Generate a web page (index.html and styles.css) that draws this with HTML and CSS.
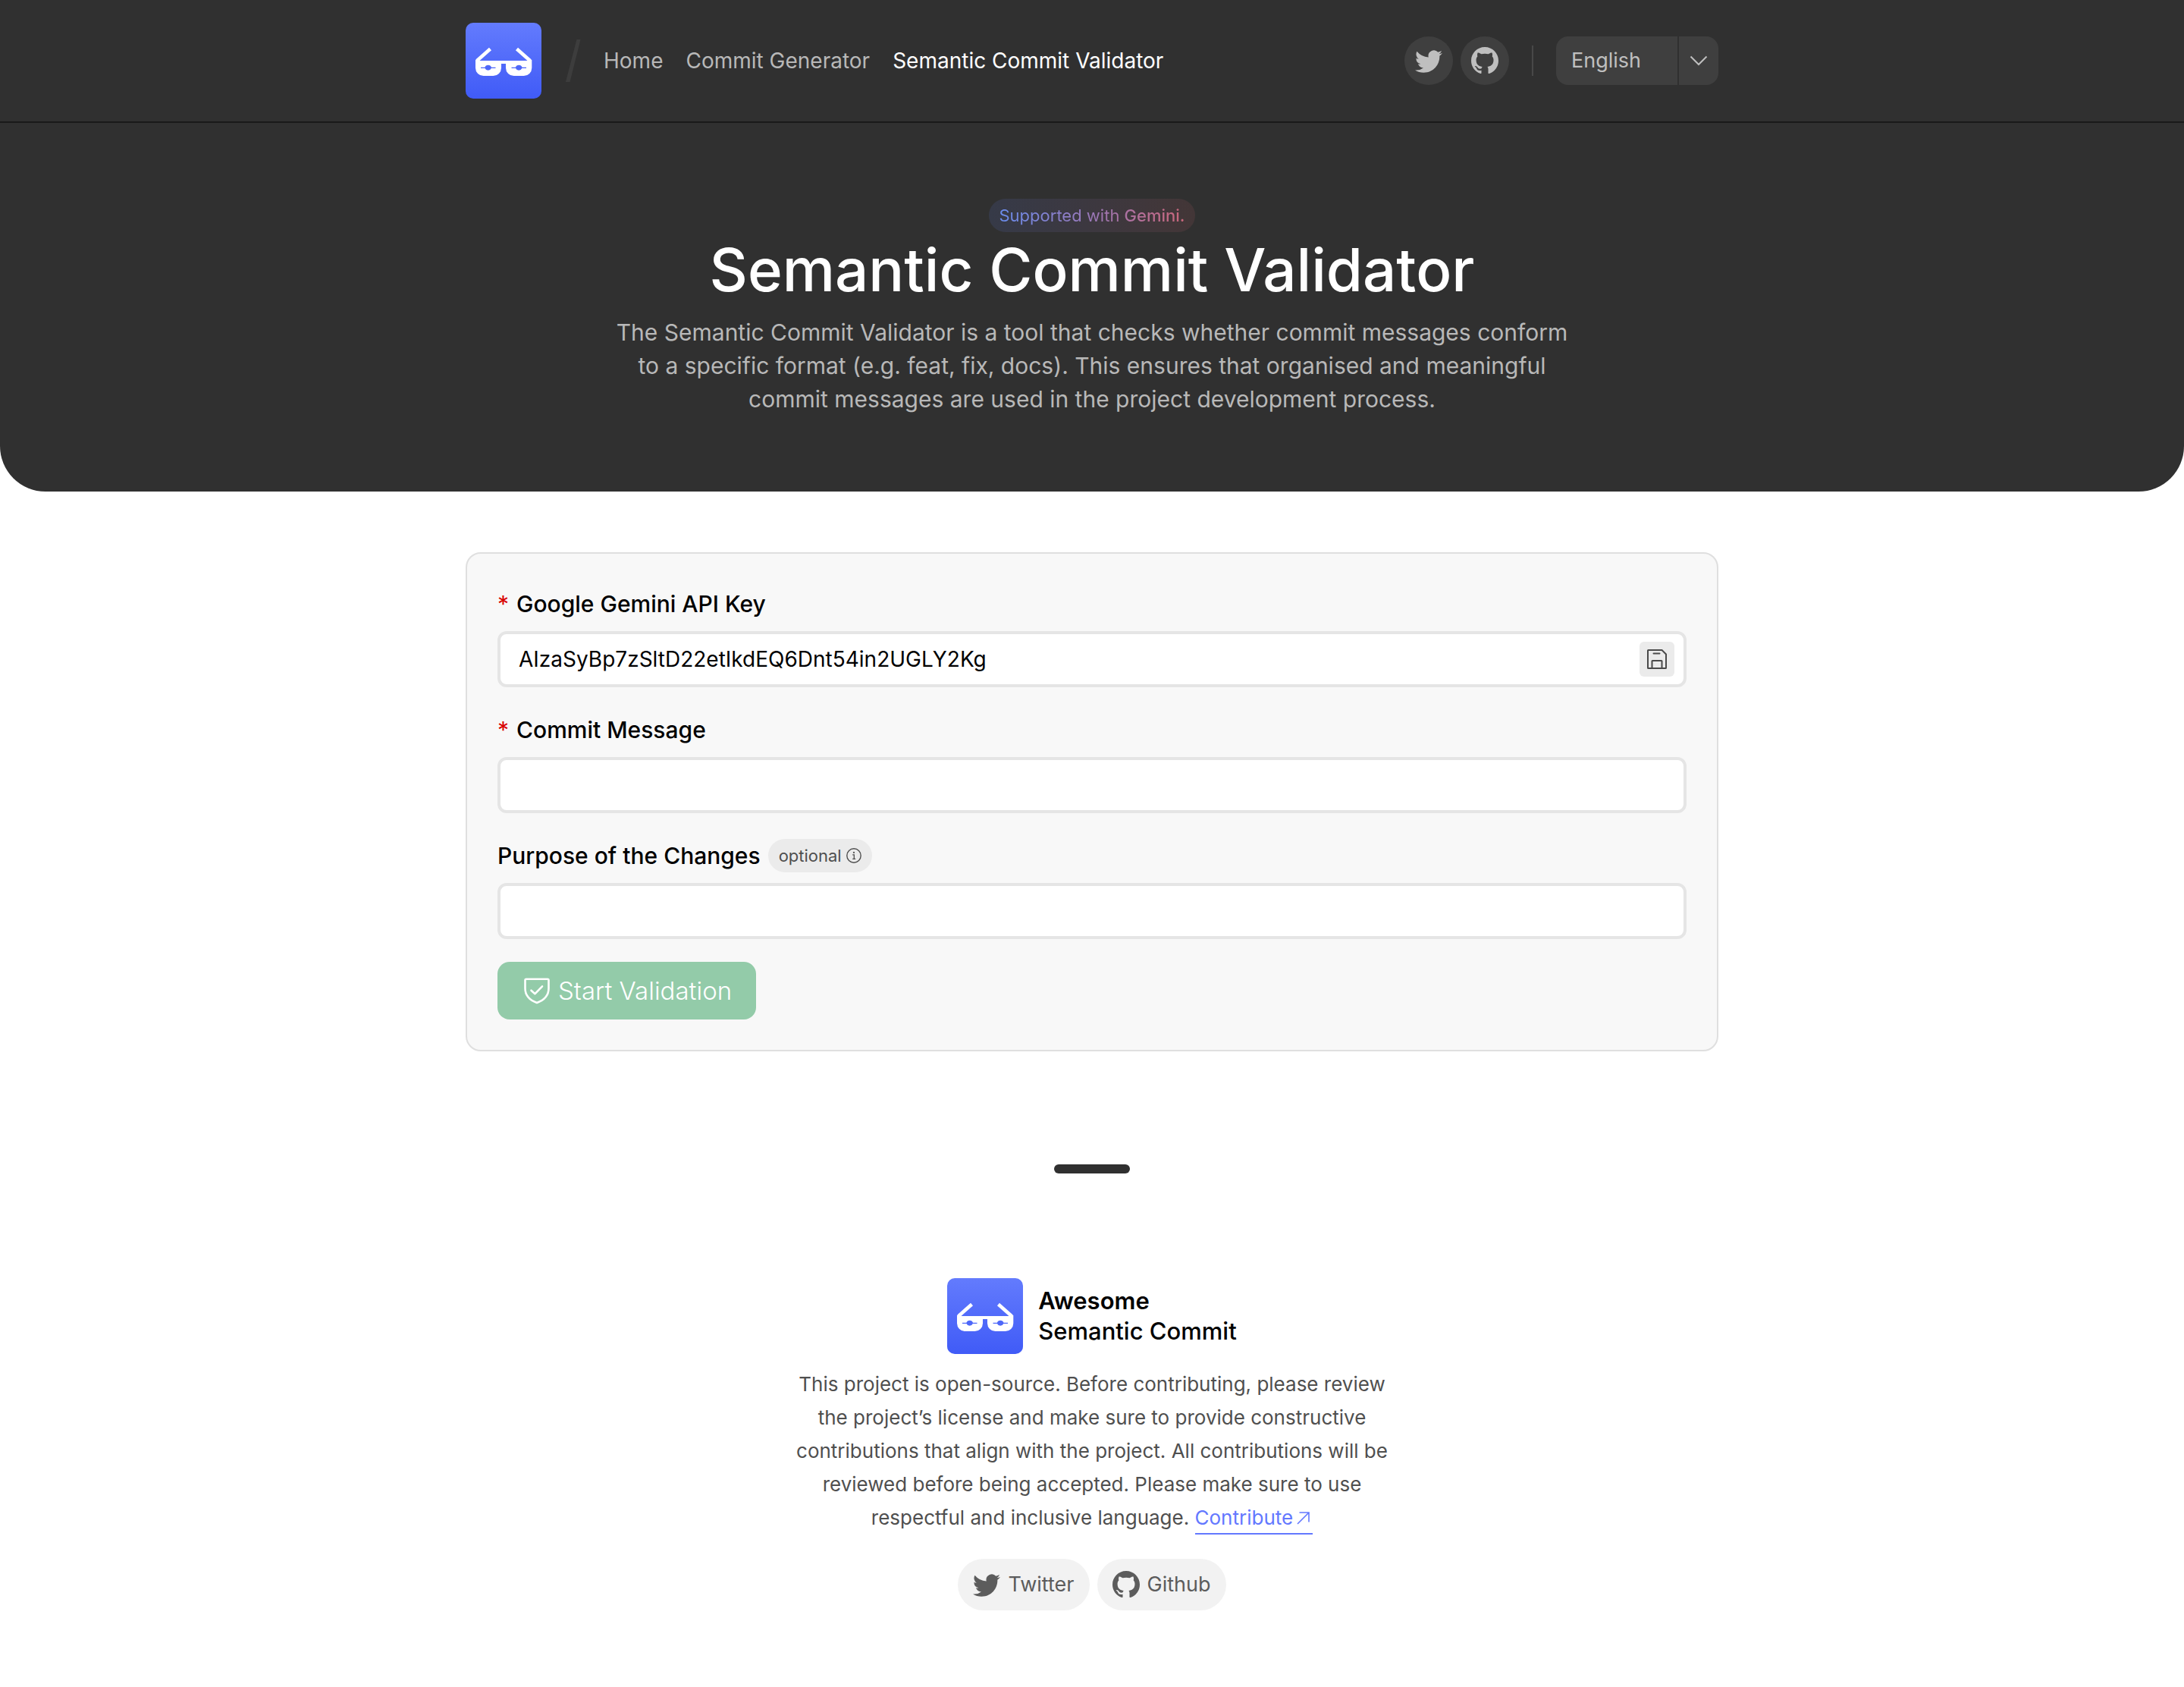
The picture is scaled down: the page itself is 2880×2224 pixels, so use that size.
FILE: index.html
```html
<!DOCTYPE html>
<html lang="en">
<head>
<meta charset="utf-8">
<title>Semantic Commit Validator</title>
<meta name="viewport" content="width=device-width, initial-scale=1">
<link rel="stylesheet" href="styles.css">
</head>
<body>
<svg class="sprite" aria-hidden="true">
  <defs>
    <linearGradient id="logo-fill" x1="0" y1="0" x2="0" y2="1">
      <stop offset="0" stop-color="#637bfd"/>
      <stop offset="1" stop-color="#405bf7"/>
    </linearGradient>
  </defs>
  <symbol id="icon-logo" viewBox="0 0 100 100">
    <rect width="100" height="100" rx="10" fill="url(#logo-fill)"/>
    <path d="M32.5 34.5L15 50M67.500 34.500L85 50" stroke="#fff" stroke-width="4.600" fill="none"/>
    <path fill="#fff" fill-rule="evenodd" d="M13 49l3-1.500 3 2.500h62l3-2.500 3.300 1.500v10.500a10.500 10.500 0 0 1-10.500 10.500h-13.300a10.500 10.500 0 0 1-10.500-10.500V54h-6v5.500a10.500 10.500 0 0 1-10.500 10.500H23.500A10.500 10.500 0 0 1 13 59.500zM20 58.800v1.200h5.500a4.500 4.500 0 0 0 8.300 0H39.500v-1.200h-5.500a4.500 4.500 0 0 0-8.600 0zM60.500 58.800v1.200H66a4.500 4.500 0 0 0 8.300 0H80v-1.200h-5.500a4.500 4.500 0 0 0-8.600 0z"/>
  </symbol>
  <symbol id="icon-twitter" viewBox="0 0 16 16">
    <path fill="currentColor" d="M5.026 15c6.038 0 9.341-5.003 9.341-9.334 0-.14 0-.282-.006-.422A6.685 6.685 0 0 0 16 3.542a6.658 6.658 0 0 1-1.889.518 3.301 3.301 0 0 0 1.447-1.817 6.533 6.533 0 0 1-2.087.793A3.286 3.286 0 0 0 7.875 6.03a9.325 9.325 0 0 1-6.767-3.429 3.289 3.289 0 0 0 1.018 4.382A3.323 3.323 0 0 1 .64 6.575v.045a3.288 3.288 0 0 0 2.632 3.218 3.203 3.203 0 0 1-.865.115 3.23 3.23 0 0 1-.614-.057 3.283 3.283 0 0 0 3.067 2.277A6.588 6.588 0 0 1 .78 13.58a6.32 6.32 0 0 1-.78-.045A9.344 9.344 0 0 0 5.026 15z"/>
  </symbol>
  <symbol id="icon-github" viewBox="0 0 16 16">
    <path fill="currentColor" d="M8 0C3.58 0 0 3.58 0 8c0 3.54 2.29 6.53 5.47 7.59.4.07.55-.17.55-.38 0-.19-.01-.82-.01-1.49-2.01.37-2.53-.49-2.69-.94-.09-.23-.48-.94-.82-1.13-.28-.15-.68-.52-.01-.53.63-.01 1.08.58 1.23.82.72 1.21 1.87.87 2.33.66.07-.52.28-.87.51-1.07-1.78-.2-3.64-.89-3.64-3.95 0-.87.31-1.59.82-2.15-.08-.2-.36-1.02.08-2.12 0 0 .67-.21 2.2.82.64-.18 1.32-.27 2-.27.68 0 1.36.09 2 .27 1.53-1.04 2.2-.82 2.2-.82.44 1.1.16 1.92.08 2.12.51.56.82 1.27.82 2.15 0 3.07-1.87 3.75-3.65 3.95.29.25.54.73.54 1.48 0 1.07-.01 1.93-.01 2.2 0 .21.15.46.55.38A8.012 8.012 0 0 0 16 8c0-4.42-3.58-8-8-8z"/>
  </symbol>
</svg>

<header class="top">
  <div class="bar">
    <div class="container bar-inner">
      <a class="logo-link" href="#" aria-label="Awesome Semantic Commit"><svg class="logo"><use href="#icon-logo"/></svg></a>
      <svg class="slash" viewBox="0 0 20 56" aria-hidden="true"><path d="M14.500 0H19.500L5.500 56H0z" fill="#3d3d3d"/></svg>
      <nav class="nav">
        <a href="#">Home</a>
        <a href="#">Commit Generator</a>
        <a class="active" href="#">Semantic Commit Validator</a>
      </nav>
      <div class="actions">
        <a class="round" href="#" aria-label="Twitter"><svg class="icon"><use href="#icon-twitter"/></svg></a>
        <a class="round" href="#" aria-label="Github"><svg class="icon"><use href="#icon-github"/></svg></a>
        <span class="separator"></span>
        <div class="language">
          <select aria-label="Language"><option>English</option></select>
          <svg class="chevron" viewBox="0 0 24 14" aria-hidden="true"><path d="M1.500 1.500L12 12 22.500 1.500" fill="none" stroke="#bfbfbf" stroke-width="2"/></svg>
        </div>
      </div>
    </div>
  </div>
  <div class="hero">
    <div class="badge"><span>Supported with <b>Gemini.</b></span></div>
    <h1>Semantic Commit Validator</h1>
    <p>The Semantic Commit Validator is a tool that checks whether commit messages conform to a specific format (e.g. feat, fix, docs). This ensures that organised and meaningful commit messages are used in the project development process.</p>
  </div>
</header>

<main class="container">
  <form class="card">
    <div class="field">
      <label for="key"><span class="required">*</span> Google Gemini API Key</label>
      <div class="input-wrap">
        <input id="key" type="text" value="AIzaSyBp7zSltD22etIkdEQ6Dnt54in2UGLY2Kg">
        <button class="save" type="button" aria-label="Save key">
          <svg viewBox="0 0 26 26" fill="none" stroke="#4a4a4a" stroke-width="2" stroke-linejoin="round" stroke-linecap="round"><path d="M1.500 1H19.500L25 6.500V24.500a.5.5 0 0 1-.5.5H1.500a.5.5 0 0 1-.5-.5V1.500a.5.5 0 0 1 .5-.5zM6.500 25V15.500a.5.5 0 0 1 .5-.5H19a.5.5 0 0 1 .5.5V25M8.500 5.500h8"/></svg>
        </button>
      </div>
    </div>
    <div class="field">
      <label for="message"><span class="required">*</span> Commit Message</label>
      <input id="message" type="text">
    </div>
    <div class="field">
      <label for="purpose">Purpose of the Changes
        <span class="optional">optional
          <svg viewBox="0 0 20 20" aria-hidden="true"><circle cx="10" cy="10" r="9.200" fill="none" stroke="currentColor" stroke-width="1.400"/><path d="M8.200 8.800H10.300V14.200M8.200 14.300h4" fill="none" stroke="currentColor" stroke-width="1.300"/><circle cx="10" cy="5.900" r="1.100" fill="currentColor"/></svg>
        </span>
      </label>
      <input id="purpose" type="text">
    </div>
    <button class="submit" type="submit" disabled>
      <svg viewBox="0 0 40 40" fill="none" stroke="#fff" stroke-width="2.600" stroke-linejoin="round" stroke-linecap="round" aria-hidden="true"><path d="M6 4.800h28a1.500 1.500 0 0 1 1.500 1.500V17C35.500 26 29.500 32.500 20 36 10.500 32.500 4.500 26 4.500 17V6.300A1.500 1.500 0 0 1 6 4.800z"/><path d="M12.500 19.700l5 4.500 9.500-9.900"/></svg>
      Start Validation
    </button>
  </form>
</main>

<hr class="divider">

<footer class="footer">
  <div class="brand">
    <svg class="logo" aria-hidden="true"><use href="#icon-logo"/></svg>
    <div><b>Awesome</b><br>Semantic Commit</div>
  </div>
  <p>This project is open-source. Before contributing, please review the project’s license and make sure to provide constructive contributions that align with the project. All contributions will be reviewed before being accepted. Please make sure to use respectful and inclusive language. <a href="#">Contribute<svg viewBox="0 0 24 24" aria-hidden="true"><path d="M4 20L19 5M6.500 5H19V17.500" fill="none" stroke="currentColor" stroke-width="1.600"/></svg></a></p>
  <div class="links">
    <a class="pill" href="#"><svg class="icon" aria-hidden="true"><use href="#icon-twitter"/></svg>Twitter</a>
    <a class="pill" href="#"><svg class="icon" aria-hidden="true"><use href="#icon-github"/></svg>Github</a>
  </div>
</footer>
</body>
</html>
```

FILE: styles.css
```css
* { box-sizing: border-box; }

body {
  margin: 0;
  background: #fff;
  color: #000;
  font-family: Inter, "Liberation Sans", sans-serif;
  font-size: 28px;
  line-height: 44px;
}

a { color: inherit; text-decoration: none; }
svg { display: block; flex: none; }
input, select, button { font: inherit; color: inherit; margin: 0; }

.sprite { position: absolute; width: 0; height: 0; }

.container {
  width: 100%;
  max-width: 1652px;
  margin: 0 auto;
}

.icon { width: 36px; height: 36px; }
.logo { width: 100px; height: 100px; }

/* Header */
.top {
  background: #303030;
  border-radius: 0 0 60px 60px;
}

.bar {
  padding: 30px 0;
  border-bottom: 2px solid #191919;
}

.bar-inner { display: flex; align-items: center; }

.slash { width: 20px; height: 56px; margin: 0 30px 0 32px; }

.nav {
  display: flex;
  gap: 30px;
  color: #b8b8b8;
}

.nav .active { color: #fff; }

.actions {
  display: flex;
  align-items: center;
  gap: 10px;
  margin-left: auto;
  color: #bfbfbf;
}

.round {
  display: grid;
  place-items: center;
  width: 64px;
  height: 64px;
  border-radius: 50%;
  background: #3f3f3f;
}

.separator {
  width: 2px;
  height: 40px;
  margin: 0 20px;
  background: #484848;
}

.language {
  display: grid;
  align-items: center;
  width: 214px;
}

.language select,
.language .chevron { grid-area: 1 / 1; }

.language select {
  appearance: none;
  width: 100%;
  height: 64px;
  padding: 0 20px;
  border: 0;
  border-radius: 16px;
  background: linear-gradient(to right, #3f3f3f 160px, #303030 160px, #303030 162px, #3f3f3f 162px);
  font-size: 27px;
}

.chevron {
  justify-self: end;
  width: 24px;
  height: 14px;
  margin-right: 14px;
  pointer-events: none;
}

/* Hero */
.hero {
  display: flex;
  flex-direction: column;
  align-items: center;
  padding: 100px 20px;
  text-align: center;
}

.badge {
  padding: 0 14px;
  border-radius: 22px;
  background: linear-gradient(to right, #363a48, #433637);
  font-size: 22px;
}

.badge span {
  background: linear-gradient(to right, #6a8cec, #9b78b8 50%, #c8667a);
  background-clip: text;
  color: transparent;
}

.badge b { font-weight: 500; }

.hero h1 {
  margin: 0 0 10px;
  color: #fff;
  font-size: 78px;
  font-weight: 500;
  line-height: 100px;
}

.hero p {
  max-width: 1280px;
  margin: 0;
  color: #b8b8b8;
  font-size: 30px;
}

/* Form */
.card {
  display: flex;
  flex-direction: column;
  align-items: stretch;
  gap: 30px;
  margin-top: 80px;
  padding: 40px;
  border: 2px solid #dfdfdf;
  border-radius: 20px;
  background: #f8f8f8;
}

.field { display: grid; gap: 10px; }

.field label {
  display: flex;
  align-items: center;
  gap: 10px;
  height: 52px;
  font-size: 30px;
  font-weight: 500;
}

.required { color: #d90000; font-weight: 400; }

.field input {
  width: 100%;
  height: 74px;
  padding: 0 24px;
  border: 4px solid #e5e5e5;
  border-radius: 12px;
  background: #fff;
}

.input-wrap { position: relative; }
.input-wrap input { padding-right: 72px; }

.save {
  position: absolute;
  top: 14px;
  right: 16px;
  display: grid;
  place-items: center;
  width: 46px;
  height: 46px;
  padding: 0;
  border: 0;
  border-radius: 6px;
  background: #ebebeb;
}

.save svg { width: 26px; height: 26px; }

.optional {
  display: flex;
  align-items: center;
  gap: 6px;
  padding: 0 14px;
  border-radius: 22px;
  background: #ebebeb;
  color: #4f4f4f;
  font-size: 22px;
  font-weight: 400;
}

.optional svg { width: 20px; height: 20px; }

.submit {
  display: flex;
  align-items: center;
  align-self: flex-start;
  gap: 8px;
  height: 76px;
  padding: 0 32px;
  border: 0;
  border-radius: 16px;
  background: #93cba9;
  color: #fff;
  font-size: 33px;
  font-weight: 300;
}

.submit svg { width: 40px; height: 40px; }

.divider {
  width: 100px;
  height: 12px;
  margin: 149px auto 138px;
  border: 0;
  border-radius: 6px;
  background: #303030;
}

/* Footer */
.footer {
  display: flex;
  flex-direction: column;
  align-items: center;
  padding: 0 20px 100px;
  text-align: center;
}

.brand {
  display: flex;
  align-items: center;
  gap: 20px;
  font-size: 31px;
  font-weight: 500;
  line-height: 40px;
  text-align: left;
}

.brand b { font-weight: 600; }

.footer p {
  max-width: 800px;
  margin: 18px 0 32px;
  color: #4f4f4f;
  font-size: 26px;
}

.footer p a {
  display: inline-flex;
  align-items: center;
  gap: 2px;
  border-bottom: 2px solid #6378ff;
  color: #6378ff;
  line-height: 40px;
}

.footer p svg { width: 24px; height: 24px; }

.links { display: flex; gap: 10px; color: #5c5c5c; }

.pill {
  display: flex;
  align-items: center;
  gap: 10px;
  height: 68px;
  padding: 0 20px;
  border-radius: 34px;
  background: #f2f2f2;
  font-size: 27px;
}
```
